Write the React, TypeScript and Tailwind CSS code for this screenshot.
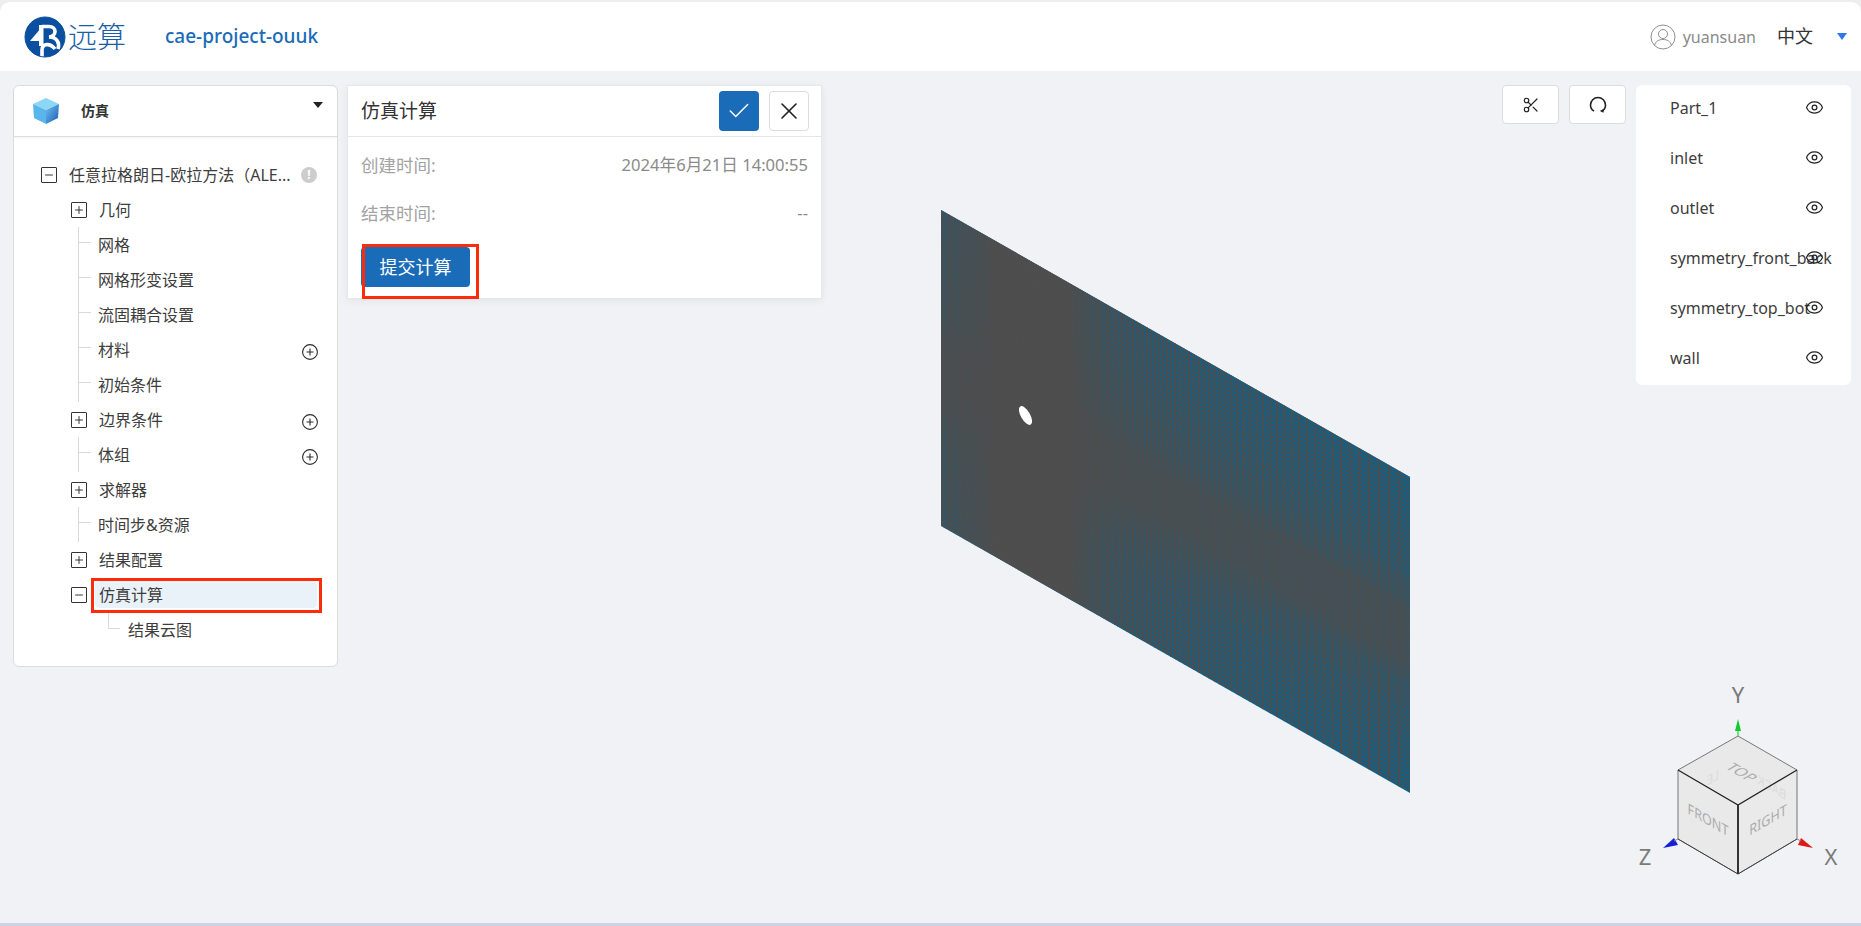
import React from "react";
import { Check, X, Scissors, Eye, Plus, Minus } from "lucide-react";

type Row = { label: string; level: 0 | 1 | 2; kind: "open" | "closed" | "leaf" | "end"; add?: boolean; info?: boolean; active?: boolean };

const rows: Row[] = [
  { label: "任意拉格朗日-欧拉方法（ALE...", level: 0, kind: "open", info: true },
  { label: "几何", level: 1, kind: "closed" },
  { label: "网格", level: 1, kind: "leaf" },
  { label: "网格形变设置", level: 1, kind: "leaf" },
  { label: "流固耦合设置", level: 1, kind: "leaf" },
  { label: "材料", level: 1, kind: "leaf", add: true },
  { label: "初始条件", level: 1, kind: "leaf" },
  { label: "边界条件", level: 1, kind: "closed", add: true },
  { label: "体组", level: 1, kind: "leaf", add: true },
  { label: "求解器", level: 1, kind: "closed" },
  { label: "时间步&资源", level: 1, kind: "leaf" },
  { label: "结果配置", level: 1, kind: "closed" },
  { label: "仿真计算", level: 1, kind: "open", active: true },
  { label: "结果云图", level: 2, kind: "end" },
];

const parts = ["Part_1", "inlet", "outlet", "symmetry_front_back", "symmetry_top_bot", "wall"];

function meshPath() {
  const x0 = 941, x1 = 1410, y0 = 210, h = 316;
  const slope = 267 / 469;
  const vertical: string[] = [];
  const diagonal: string[] = [];
  let x = x0;
  while (x < x1) {
    vertical.push(`M${x.toFixed(2)} ${(y0 + (x - x0) * slope).toFixed(2)}v${h}`);
    let d = 1.5;
    if (x < 1005) d = 1.5 + 1.1 * ((1005 - x) / 64);
    if (x > 1060) d = 1.5 + 9.5 * Math.pow((x - 1060) / 350, 1.05);
    x += d;
  }
  let v = 0;
  while (v < h) {
    const y = y0 + v;
    diagonal.push(`M${x0} ${y.toFixed(2)}L${x1} ${(y + 267).toFixed(2)}`);
    const dist = Math.abs(v - 160);
    v += dist < 25 ? 1.9 : 1.9 + 2.6 * Math.pow((dist - 25) / 135, 0.9);
  }
  return { vertical: vertical.join(""), diagonal: diagonal.join("") };
}

const mesh = meshPath();

function Mesh() {
  return (
    <svg className="absolute left-[930px] top-[200px]" width="490" height="610" viewBox="930 200 490 610">
      <polygon points="941,210 1410,477 1410,793 941,526" fill="#0f6189" />
      <clipPath id="meshClip">
        <polygon points="941,210 1410,477 1410,793 941,526" />
      </clipPath>
      <g clipPath="url(#meshClip)" fill="none" stroke="#4e4e4e">
        <path d={mesh.vertical} strokeWidth="1.7" />
        <path d={mesh.diagonal} strokeWidth="1.4" />
      </g>
      <ellipse cx="1025.5" cy="415.5" rx="4.6" ry="10.5" transform="rotate(-30 1025.5 415.5)" fill="#ffffff" />
    </svg>
  );
}

function AxisCube() {
  return (
    <svg className="absolute left-[1610px] top-[670px]" width="251" height="253" viewBox="1610 670 251 253">
      <polygon points="1738,736 1797,770 1738,805 1678,770" fill="#e9e9e9" />
      <polygon points="1678,770 1738,805 1738,874 1678,839" fill="#e9e9e9" />
      <polygon points="1738,805 1797,770 1797,839 1738,874" fill="#eaeaea" />
      <g fontFamily="'Noto Sans', sans-serif" textAnchor="middle">
        <text transform="matrix(-.87 -.5 0 1 1772 792)" fontSize="13" fill="#dcdcdc">BACK</text>
        <text transform="matrix(-.87 .5 0 1 1713 782)" fontSize="13" fill="#dcdcdc">LE</text>
        <text transform="matrix(.87 .5 -.87 .5 1737 775)" fontSize="15" fill="#acacac">TOP</text>
        <text transform="matrix(.87 .5 0 1 1708 825)" fontSize="14.5" fill="#acacac">FRONT</text>
        <text transform="matrix(.87 -.5 0 1 1768 825)" fontSize="14.5" fill="#acacac">RIGHT</text>
      </g>
      <path d="M1738 736L1797 770M1738 736L1678 770M1678 770V839L1738 874L1797 839V770" fill="none" stroke="#777" strokeWidth="1" />
      <path d="M1678 770L1738 805L1797 770" fill="none" stroke="#222" strokeWidth="1.3" />
      <path d="M1738 805V874" stroke="#333" strokeWidth="2" />
      <path d="M1678 839L1738 874L1797 839" fill="none" stroke="#444" strokeWidth="1" />
      <path d="M1738 736V728" stroke="#5ad85a" strokeWidth="1.5" />
      <polygon points="1738,719 1741,731 1735,731" fill="#12c92f" />
      <polygon points="1663,848 1674,838 1678,845" fill="#1420d8" />
      <polygon points="1813,848 1801,838 1798,845" fill="#e01818" />
      <path d="M1678 839L1674 841M1797 839L1801 841" stroke="#888" strokeWidth="1" />
      <g fontFamily="'Noto Sans', sans-serif" fontSize="22" fill="#7a7a7a" textAnchor="middle">
        <text x="1738" y="703">Y</text>
        <text x="1645" y="865">Z</text>
        <text x="1831" y="865">X</text>
      </g>
    </svg>
  );
}

function Logo() {
  return (
    <svg width="42" height="42" viewBox="0 0 42 42" className="shrink-0">
      <circle cx="21" cy="21" r="20" fill="#0b4fa0" />
      <polygon points="6,25 17,12 17,25" fill="#fff" />
      <rect x="15" y="9" width="4.5" height="21" fill="#fff" />
      <path d="M18 10.5H25C33 10.5 33 20.5 25 21C33 21 36 27 34 33" fill="none" stroke="#fff" strokeWidth="3.6" />
      <path d="M18 41V34C18 27.5 26 26.5 31 33" fill="none" stroke="#fff" strokeWidth="3.6" />
      <circle cx="21" cy="21" r="20" fill="none" stroke="#0b4fa0" strokeWidth="1" />
    </svg>
  );
}

function CubeIcon() {
  return (
    <svg width="28" height="28" viewBox="0 0 28 28" className="shrink-0">
      <defs>
        <linearGradient id="cubeRight" x1="0" y1="0" x2="1" y2="1">
          <stop offset="0" stopColor="#6fc0ee" />
          <stop offset="1" stopColor="#1a5db5" />
        </linearGradient>
      </defs>
      <polygon points="14,1 27,7 14,13 1,7" fill="#8cd6f6" />
      <polygon points="1,7 14,13 14,27 2,21" fill="#58b6ec" />
      <polygon points="14,13 27,7 26,21 14,27" fill="url(#cubeRight)" />
    </svg>
  );
}

function BoxIcon({ open }: { open: boolean }) {
  return (
    <span className="w-4 h-4 shrink-0 flex items-center justify-center border-[1.5px] border-[#333333] rounded-[1px]">
      {open ? <Minus size={12} strokeWidth={1.8} color="#222" /> : <Plus size={12} strokeWidth={1.8} color="#222" />}
    </span>
  );
}

function TreeRow({ row }: { row: Row }) {
  const label = <span className="whitespace-nowrap">{row.label}</span>;
  return (
    <div className="h-[35px] flex items-center text-[16px] text-[#3d3d3d]">
      {row.kind === "leaf" && (
        <span className="ml-[64px] w-[20px] h-full shrink-0 flex items-center border-l border-[#d9d9d9]">
          <span className="w-3 h-px bg-[#d9d9d9] mb-[4px]" />
        </span>
      )}
      {row.kind === "end" && (
        <span className="ml-[94px] w-[20px] h-[17px] self-start shrink-0">
          <span className="block w-3 h-full border-l border-b border-[#d9d9d9]" />
        </span>
      )}
      {row.kind !== "leaf" && row.kind !== "end" && (
        <span className={row.level === 0 ? "ml-[27px] mr-[12px] flex" : "ml-[57px] flex"}>
          <BoxIcon open={row.kind === "open"} />
        </span>
      )}
      {row.active ? (
        <div className="relative flex-1 h-[27px] ml-[8px] mr-[20px] pl-[4px] flex items-center bg-[#eaf2f9] rounded-[4px]">
          {label}
          <span className="absolute left-[-4px] right-[-5px] top-[-3px] bottom-[-5px] border-[3px] border-[#fb2c0a]" />
        </div>
      ) : row.kind === "closed" ? (
        <span className="ml-[12px]">{label}</span>
      ) : (
        label
      )}
      {row.add && (
        <svg width="16" height="16" viewBox="0 0 16 16" className="ml-auto mr-[19px] mt-[5px] shrink-0" fill="none" stroke="#2a2a2a" strokeWidth="1.1">
          <circle cx="8" cy="8" r="7.4" />
          <path d="M8 4.5v7M4.5 8h7" />
        </svg>
      )}
      {row.info && (
        <span className="ml-auto mr-[20px] w-4 h-4 rounded-full bg-[#cdcdcd] text-white text-[12px] font-bold flex items-center justify-center shrink-0">!</span>
      )}
    </div>
  );
}

export default function App() {
  return (
    <div className="relative h-[926px] w-[1861px] overflow-hidden flex flex-col bg-[#eeeeee] font-['Noto_Sans','Noto_Sans_CJK_SC',sans-serif]">
      <header className="mt-[2px] h-[69px] shrink-0 flex items-center bg-white rounded-t-[10px]">
        <div className="ml-[24px] flex items-center">
          <Logo />
          <span className="ml-[2px] text-[29px] font-light leading-none text-[#1a5ea6]">远算</span>
        </div>
        <span className="ml-[39px] text-[19px] font-medium text-[#1a6bb8]">cae-project-ouuk</span>
        <div className="ml-auto flex items-center">
          <svg width="26" height="26" viewBox="0 0 26 26" fill="none" stroke="#8f8f8f" strokeWidth="1" className="-ml-[1px]">
            <circle cx="13" cy="13" r="12" />
            <circle cx="13" cy="10" r="4.5" />
            <path d="M4.5 21.5C5.5 17 9 15.5 13 15.5S20.5 17 21.5 21.5" />
          </svg>
          <span className="ml-[7px] text-[16px] text-[#8a8a8a]">yuansuan</span>
          <span className="ml-[21px] text-[18px] text-[#333333]">中文</span>
          <span className="ml-[24px] mr-[14px] w-0 h-0 border-x-[5.5px] border-x-transparent border-t-[7px] border-t-[#2f76e6]" />
        </div>
      </header>

      <main className="flex-1 flex items-start pt-[14px] pl-[13px] pr-[10px] bg-[#f0f2f6]">
        <section className="w-[325px] h-[582px] shrink-0 bg-white border border-[#dcdcdc] rounded-[6px]">
          <div className="relative h-[51px] flex items-center pl-[18px] border-b border-[#dedede] rounded-t-[6px] shadow-[0_1px_2px_rgba(0,0,0,0.05)]">
            <CubeIcon />
            <span className="ml-[21px] -mt-[2px] text-[14px] font-bold text-[#333333]">仿真</span>
            <span className="absolute right-[14px] top-[16px] w-0 h-0 border-x-[5.5px] border-x-transparent border-t-[6px] border-t-[#222222]" />
          </div>
          <div className="pt-[20px]">
            {rows.map((r) => (
              <TreeRow key={r.label} row={r} />
            ))}
          </div>
        </section>

        <section className="ml-[9px] w-[475px] h-[214px] shrink-0 bg-white border border-[#e6e7ea] shadow-[0_2px_8px_rgba(0,0,0,0.06)] flex flex-col">
          <div className="h-[51px] shrink-0 flex items-center pl-[13px] pr-[12px] border-b border-[#e4e5e8]">
            <span className="text-[19px] text-[#333333]">仿真计算</span>
            <button className="ml-auto w-10 h-10 flex items-center justify-center rounded-[4px] bg-[#1a6bb8]">
              <Check size={26} strokeWidth={1.4} color="#ffffff" />
            </button>
            <button className="ml-[10px] w-10 h-10 flex items-center justify-center rounded-[4px] bg-white border border-[#dddddd]">
              <X size={28} strokeWidth={1.4} color="#222222" />
            </button>
          </div>
          <div className="px-[13px] pt-[4px]">
            <div className="h-[48px] flex items-center justify-between">
              <span className="text-[17.5px] text-[#a3a3a3]">创建时间:</span>
              <span className="text-[16.6px] text-[#8a8a8a]">2024年6月21日 14:00:55</span>
            </div>
            <div className="h-[48px] flex items-center justify-between">
              <span className="text-[17.5px] text-[#a3a3a3]">结束时间:</span>
              <span className="text-[16.6px] text-[#8a8a8a]">--</span>
            </div>
          </div>
          <div className="relative mt-[10px] ml-[13px] w-[109px] h-[40px]">
            <button className="w-full h-full rounded-[4px] bg-[#1a6bb8] text-white text-[18px]">提交计算</button>
            <span className="absolute left-[1px] top-[-3px] w-[117px] h-[55px] border-[3px] border-[#fb2c0a]" />
          </div>
        </section>

        <div className="ml-auto flex items-start">
          <button className="w-[57px] h-[39px] flex items-center justify-center bg-white border border-[#dddddd] rounded-[4px]">
            <Scissors size={18} strokeWidth={1.6} color="#222222" />
          </button>
          <button className="ml-[10px] w-[57px] h-[39px] flex items-center justify-center bg-white border border-[#dddddd] rounded-[4px]">
            <svg width="18" height="18" viewBox="0 0 18 18" fill="none" stroke="#222222" strokeWidth="1.6">
              <path d="M5 15.2C2.8 13.8 1.5 11.6 1.5 9A7.5 7.5 0 0 1 16.5 9C16.5 11.6 15.2 13.8 13 15.2" />
              <path d="M11.6 14.6l2.2.9.3-2.2" />
            </svg>
          </button>
          <aside className="ml-[10px] w-[215px] h-[300px] bg-white rounded-[6px] pl-[35px] pr-[27px]">
            {parts.map((p) => (
              <div key={p} className="h-[50px] flex items-center justify-between text-[16px] text-[#3d3d3d]">
                <span className="w-0 whitespace-nowrap leading-none pb-[5px] -ml-[1px]">{p}</span>
                <Eye size={19} strokeWidth={1.5} color="#222222" className="-mt-[5px]" />
              </div>
            ))}
          </aside>
        </div>
      </main>

      <div className="h-[3px] shrink-0 bg-[#cdd4e4]" />

      <Mesh />
      <AxisCube />
    </div>
  );
}
